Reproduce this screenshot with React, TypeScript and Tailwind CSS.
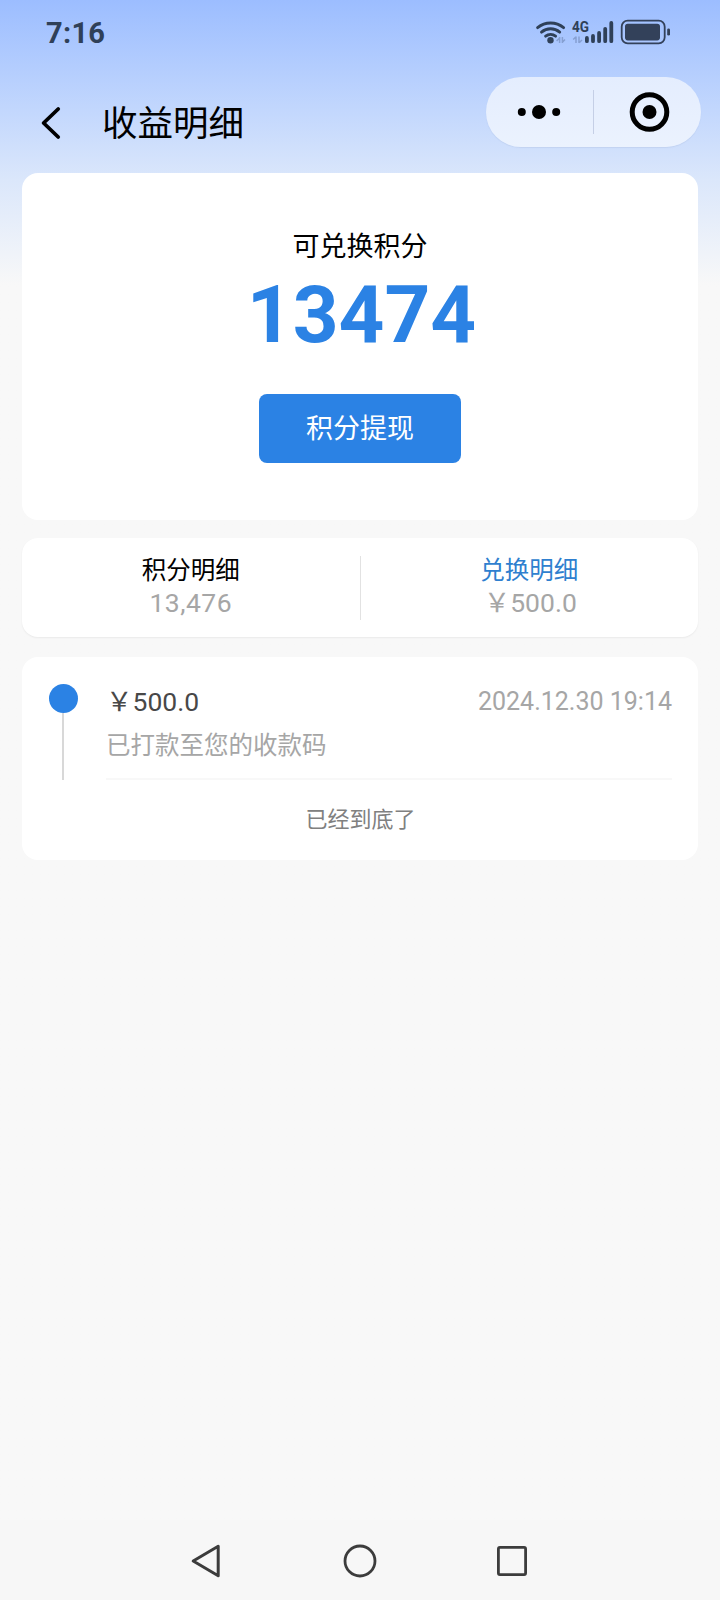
import React from 'react'

const digits = "font-['Roboto','Noto_Sans_CJK_SC',sans-serif]"

const records = [
  { amount: '￥500.0', time: '2024.12.30 19:14', note: '已打款至您的收款码' },
]

const StatusIcons = () => (
  <svg width="140" height="32" viewBox="532 16 140 32" fill="none" className="block">
    {/* Wifi */}
    <g stroke="#2f4058" strokeWidth="2.9" strokeLinecap="round">
      <path d="M537.6 27.6a20.5 20.5 0 0 1 26 0" />
      <path d="M541.5 32.1a14 14 0 0 1 18.2 0" />
      <path d="M545.6 36.2a8 8 0 0 1 10 0" />
    </g>
    <circle cx="550.5" cy="40.2" r="3.2" fill="#2f4058" />
    <path d="M559.6 37v6M562.4 37v6M556.6 41l3-3M565 39.5l-2.6 2.6" stroke="#86a0d2" strokeWidth="1.5" />

    {/* Mobile signal */}
    <text x="572" y="32" fill="#2f4058" fontSize="15.5" fontWeight="700" textLength="17" lengthAdjust="spacingAndGlyphs" className="font-['Roboto']">4G</text>
    <path d="M576 36.5v6.5M579 36.5v6.5M573.2 39.5l2.8-2.6M582 40l-2.8 2.6" stroke="#86a0d2" strokeWidth="1.5" />
    <g stroke="#2f4058" strokeWidth="3.8" strokeLinecap="round">
      <path d="M586.9 38v3.2M593 36v5.2M599.1 33v8.2M605.2 28.8v12.4M611.3 23v18.2" />
    </g>

    {/* Battery */}
    <rect x="621.7" y="20.7" width="43" height="22.6" rx="6" stroke="#33415a" strokeWidth="1.8" />
    <rect x="625" y="23.8" width="35" height="16.6" rx="2.8" fill="#33415a" />
    <path d="M668.6 29.8v4.4" stroke="#33415a" strokeWidth="2.8" strokeLinecap="round" />
  </svg>
)

const StatusBar = () => (
  <div className="flex h-16 items-center justify-between pr-12 pl-[46px]">
    <span className={`${digits} pt-0.5 text-[29px] leading-[60px] font-bold tracking-[0.3px] text-[#2f4058]`}>7:16</span>
    <StatusIcons />
  </div>
)

const Capsule = () => (
  <div className="mt-[13px] flex h-[70px] w-[215px] items-center rounded-full bg-linear-to-b from-[#e4edfe] to-[#ebf2fe] pl-px shadow-[0_1px_1px_rgba(120,140,180,0.15)]">
    <svg width="106" height="44" viewBox="0 0 106 44" className="block">
      <circle cx="34.8" cy="22" r="4" />
      <circle cx="52" cy="22" r="7" />
      <circle cx="69.2" cy="22" r="4" />
    </svg>
    <div className="h-11 w-px bg-[#c5cfe6]" />
    <svg width="106" height="44" viewBox="0 0 106 44" fill="none" className="block">
      <circle cx="55.5" cy="22" r="17.3" stroke="#000" strokeWidth="5" />
      <circle cx="55.5" cy="22" r="7" fill="#000" />
    </svg>
  </div>
)

const NavBar = () => (
  <div className="flex h-[109px] items-start justify-between pr-[19px] pl-[39px]">
    <div className="mt-[35px] flex items-start">
      <svg width="24" height="48" viewBox="0 0 24 48" fill="none" className="block">
        <path d="M19.2 10L4.6 24l14.6 14" stroke="#000" strokeWidth="3.8" strokeLinecap="round" strokeLinejoin="round" />
      </svg>
      <h1 className="ml-[39px] text-[35.5px] leading-[44px] text-black">收益明细</h1>
    </div>
    <Capsule />
  </div>
)

const App = () => {
  return (
    <div className="flex h-[1600px] w-[720px] flex-col overflow-hidden bg-[#f8f8f8] bg-linear-to-b from-[#9cbdff] via-[#dbe7fb] via-[180px] to-[#f8f8f8] to-[285px] font-['Noto_Sans_CJK_SC',sans-serif]">
      <StatusBar />
      <NavBar />

      <main className="flex flex-1 flex-col px-[22px]">
        {/* Balance */}
        <section className="flex h-[347px] flex-col items-center rounded-2xl bg-white">
          <p className="mt-[56px] text-[27px] leading-8 text-black">可兑换积分</p>
          <p className={`${digits} mt-[14px] pl-[3px] text-[80px] leading-[80px] font-bold text-[#2b82e4]`}>13474</p>
          <button className="mt-[39px] h-[69px] w-[202px] rounded-lg bg-[#2b82e4] pb-[2px] text-[27px] text-white">
            积分提现
          </button>
        </section>

        {/* Tabs */}
        <section className="mt-[18px] flex h-[99px] items-center rounded-2xl bg-white shadow-[0_1px_2px_rgba(0,0,0,0.06)]">
          <div className="flex-1 pb-[3px] text-center">
            <p className="text-[24.5px] leading-8 text-black">积分明细</p>
            <p className={`${digits} text-[26.5px] leading-[35px] tracking-[0.5px] text-[#a6a6a6]`}>13,476</p>
          </div>
          <div className="h-16 w-px bg-[#e2e2e2]" />
          <div className="flex-1 pb-[2px] text-center">
            <p className="text-[24.5px] leading-8 text-[#2f7fcf]">兑换明细</p>
            <p className={`${digits} pl-[2px] text-[26.5px] leading-9 text-[#a6a6a6]`}>￥500.0</p>
          </div>
        </section>

        {/* Records */}
        <section className="mt-5 h-[203px] rounded-2xl bg-white pt-[27px] pr-[26px] pl-[27px]">
          {records.map((item) => (
            <div key={item.time} className="flex h-24">
              <div className="flex w-[29px] flex-col items-center">
                <div className="h-[29px] w-[29px] rounded-full bg-[#2b82e4]" />
                <div className="mr-px w-[2px] flex-1 bg-[#d8d8d8]" />
              </div>
              <div className="ml-7 flex-1 border-b-2 border-[#f8f8f8]">
                <div className="flex items-start justify-between">
                  <span className={`${digits} text-[26.5px] leading-9 text-[#484848]`}>{item.amount}</span>
                  <span className={`${digits} text-[25px] leading-[35px] text-[#a6a6a6]`}>{item.time}</span>
                </div>
                <p className="mt-2 text-[24.5px] leading-8 text-[#a6a6a6]">{item.note}</p>
              </div>
            </div>
          ))}
          <p className="mt-[21px] text-center text-[22px] leading-8 text-[#808080]">已经到底了</p>
        </section>
      </main>

      {/* System navigation */}
      <nav className="flex h-20 items-center justify-center gap-[116px] bg-[#f7f7f7]">
        <svg width="36" height="36" viewBox="0 0 36 36" fill="none" stroke="#3c3c3c" strokeWidth="3" strokeLinejoin="round" className="block">
          <path d="M3.2 19L28.2 4.2V33.8Z" />
        </svg>
        <svg width="36" height="36" viewBox="0 0 36 36" fill="none" stroke="#3c3c3c" strokeWidth="2.8" className="block">
          <circle cx="18" cy="19" r="15" />
        </svg>
        <svg width="36" height="36" viewBox="0 0 36 36" fill="none" stroke="#3c3c3c" strokeWidth="2.8" className="block">
          <rect x="4.4" y="5.4" width="27.2" height="27.2" rx="1.5" />
        </svg>
      </nav>
    </div>
  )
}

export default App
